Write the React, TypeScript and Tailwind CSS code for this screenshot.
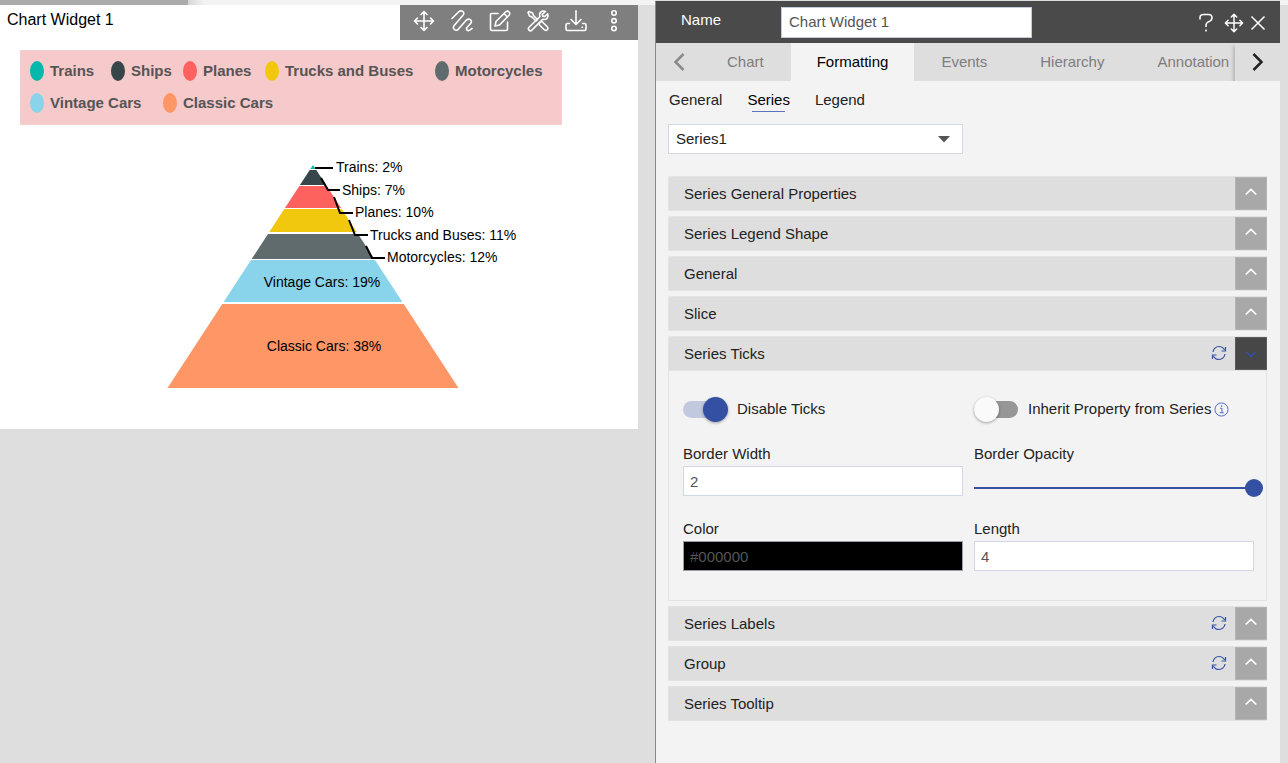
import React, { useState } from 'react';

const legendItems = [
  { name: 'Trains', dot: 'bg-[#04b8ab]', width: 'w-[81px]' },
  { name: 'Ships', dot: 'bg-[#374649]', width: 'w-[72px]' },
  { name: 'Planes', dot: 'bg-[#fd625e]', width: 'w-[82px]' },
  { name: 'Trucks and Buses', dot: 'bg-[#f2c80f]', width: 'w-[170px]' },
  { name: 'Motorcycles', dot: 'bg-[#5f6b6d]', width: 'w-[107px]' },
  { name: 'Vintage Cars', dot: 'bg-[#8ad4eb]', width: 'w-[133px]' },
  { name: 'Classic Cars', dot: 'bg-[#fe9666]', width: 'w-[133px]' },
];

const slices = [
  { label: 'Trains: 2%', color: '#04b8ab', top: 10, bottom: 14, x: 181, y: 17, tick: '160,13 178,13' },
  { label: 'Ships: 7%', color: '#374649', top: 15, bottom: 30, x: 187, y: 40, tick: '166,23 173,35 185,35' },
  { label: 'Planes: 10%', color: '#fd625e', top: 31, bottom: 53, x: 200, y: 62, tick: '179,42 185,58 198,58' },
  { label: 'Trucks and Buses: 11%', color: '#f2c80f', top: 54, bottom: 77, x: 215, y: 85, tick: '194,65 200,80 213,80' },
  { label: 'Motorcycles: 12%', color: '#5f6b6d', top: 79, bottom: 104, x: 232, y: 107, tick: '211,91 217,103 230,103' },
  { label: 'Vintage Cars: 19%', color: '#8ad4eb', top: 105, bottom: 147, x: 167, y: 132 },
  { label: 'Classic Cars: 38%', color: '#fe9666', top: 149, bottom: 233, x: 169, y: 196 },
];

// Apex is at (158, 10), base is 291 wide at y = 233
const slicePoints = (top: number, bottom: number) => {
  const half = (y: number) => ((y - 10) / 223) * 145.5;
  return [
    [158 - half(top), top],
    [158 + half(top), top],
    [158 + half(bottom), bottom],
    [158 - half(bottom), bottom],
  ]
    .map((p) => p.join(','))
    .join(' ');
};

const Icon = ({ children, className = 'size-[22px]' }: { children: React.ReactNode; className?: string }) => (
  <svg
    viewBox="0 0 22 22"
    className={className}
    fill="none"
    stroke="currentColor"
    strokeWidth="1.6"
    strokeLinecap="round"
    strokeLinejoin="round"
    aria-hidden="true"
  >
    {children}
  </svg>
);

const movePath = 'M11 1.5v19M1.5 11h19M8 4.5l3-3 3 3M8 17.5l3 3 3-3M4.5 8l-3 3 3 3M17.5 8l3 3-3 3';

const toolbar = [
  { name: 'Move', icon: <path d={movePath} /> },
  {
    name: 'Style',
    icon: (
      <path d="M1 8.500 7.500 2c3-2.500 7-.2 4.500 3.200L3.200 15.500c-2.200 3 1.300 6.300 4 3.800l8-9c2.800-2.700 6.800-.2 4.500 3L16 17.500c-1.500 2.200.8 4 2.700 2.700L21 18.500" />
    ),
  },
  {
    name: 'Edit',
    icon: (
      <>
        <path d="M9 3.500H2.500c-.8 0-1 .4-1 1V19c0 1 .6 1.500 1.500 1.500h14c1 0 1.500-.5 1.500-1.500v-7" />
        <path d="m7 11.500 9.500-9.500c1.200-1 2.500-1 3.500 0s1 2.200 0 3.300L10.500 15l-4.500 1zM15 3.500l3.500 3.500" />
      </>
    ),
  },
  {
    name: 'Tools',
    icon: (
      <>
        <path d="M2 1.500 5.500 3l1 2.500 4 4-1.500 1.500-4-4-2.500-1L1 2.500zM13.500 12l1.500-.5 5 5c1.500 1.500.8 2.600.2 3.200s-1.700 1.300-3.200-.2l-5-5 .5-1.500z" />
        <path d="M18.500 1.500c-4-1.500-7 1.500-5.500 5L2 17.200c-1 1-.8 2.100 0 2.900s2 .9 2.900 0L15.700 9.200c3.500 1.300 6.300-1.700 4.900-5.300L17.800 6.500l-2.100-.4-.4-2z" />
      </>
    ),
  },
  {
    name: 'Download',
    icon: (
      <>
        <path d="M11 .8V14M6 9.500l5 5 5-5" />
        <path d="M4.500 13.500H2.500c-1 0-1.500.6-1.500 1.500v4c0 1 .5 1.500 1.500 1.500h17c1 0 1.500-.5 1.500-1.500v-4c0-.9-.5-1.500-1.500-1.500h-2M17 17.200h.5" />
      </>
    ),
  },
  {
    name: 'More',
    icon: (
      <>
        <circle cx="11" cy="3" r="2.200" />
        <circle cx="11" cy="10.800" r="2.200" />
        <circle cx="11" cy="18.500" r="2.200" />
      </>
    ),
  },
];

const ChartWidget = () => (
  <section className="relative mr-[17px] bg-white pb-[34px]">
    <h1 className="px-[7px] pt-[3px] text-[16px] leading-6 text-black">Chart Widget 1</h1>
    <div className="absolute top-0 right-0 flex h-[35px] items-start gap-4 bg-[#7f7f7f] px-[13px] pt-[5px] text-white">
      {toolbar.map(({ name, icon }) => (
        <button key={name} type="button" aria-label={name}>
          <Icon>{icon}</Icon>
        </button>
      ))}
    </div>

    <ul className="mt-[18px] ml-5 flex w-[542px] flex-wrap border border-[#f3cfd0] bg-[#f6c9ca] px-[9px] pt-1 pb-[5px]">
      {legendItems.map(({ name, dot, width }) => (
        <li key={name} className={`flex h-8 items-center gap-[6px] whitespace-nowrap ${width}`}>
          <span className={`h-5 w-[14px] shrink-0 rounded-[50%] ${dot}`} />
          <span className="pt-px text-[15px] font-bold text-[#555]">{name}</span>
        </li>
      ))}
    </ul>

    <svg viewBox="0 0 370 240" className="mt-[30px] ml-[155px] h-[240px] w-[370px]" role="img" aria-label="Vehicle share pyramid">
      {slices.map(({ label, color, top, bottom }) => (
        <polygon key={label} points={slicePoints(top, bottom)} fill={color} />
      ))}
      {slices.map(({ label, x, y, tick }) => (
        <g key={label}>
          {tick && <polyline points={tick} fill="none" stroke="#000" strokeWidth="2" />}
          <text x={x} y={y} textAnchor={tick ? 'start' : 'middle'} className="fill-black text-[14px]">
            {label}
          </text>
        </g>
      ))}
    </svg>
  </section>
);

const tabs = ['Chart', 'Formatting', 'Events', 'Hierarchy', 'Annotation'];

const RefreshIcon = () => (
  <svg viewBox="0 0 16 16" className="size-4" fill="none" stroke="currentColor" strokeWidth="1.200" aria-hidden="true">
    <path d="M2 7c.3-3 2.900-5.500 6-5.500 2.400 0 4.400 1.300 5.500 3.300M14.500 2v4h-4M14 9c-.3 3-2.900 5.500-6 5.500-2.400 0-4.400-1.300-5.500-3.300M1.500 14v-4h4" />
  </svg>
);

type SectionProps = { title: string; refresh?: boolean; open?: boolean; children?: React.ReactNode };

const Section = ({ title, refresh, open, children }: SectionProps) => (
  <section className="mb-[5px]">
    <div className="flex h-[35px] items-center border border-r-0 border-[#e3e3e3] bg-[#dedede]">
      <h2 className="flex-1 pt-[2px] pl-[15px] text-[15px]">{title}</h2>
      {refresh && (
        <button type="button" aria-label={`Reset ${title}`} className="mr-2 mb-px text-[#3450a3]">
          <RefreshIcon />
        </button>
      )}
      <button
        type="button"
        aria-label={`Toggle ${title}`}
        aria-expanded={!!open}
        className={`flex h-[33px] w-8 items-center justify-center border ${
          open ? 'border-[#5c5c5c] bg-[#474747] text-[#3450a3]' : 'border-[#b5b5b5] bg-[#a8a8a8] text-white'
        }`}
      >
        <svg
          viewBox="0 0 12 8"
          className={open ? 'h-2 w-3' : 'mb-[3px] h-2 w-3'}
          fill="none"
          stroke="currentColor"
          strokeWidth="1.700"
          aria-hidden="true"
        >
          <path d={open ? 'M1 1.500l5 5 5-5' : 'M.7 6.500L6 1.500l5.300 5'} />
        </svg>
      </button>
    </div>
    {children}
  </section>
);

const toggleClass =
  "relative h-[17px] w-[44px] shrink-0 appearance-none rounded-full bg-[#969696] before:absolute before:-top-1 before:left-0 before:size-[25px] before:rounded-full before:bg-[#fafafa] before:shadow-[0_1px_3px_rgba(0,0,0,0.35)] before:content-[''] checked:bg-[#c2c8de] checked:before:left-5 checked:before:bg-[#3450a3]";

const inputClass = 'block h-[30px] w-full border border-[#d0d7e5] bg-white px-[6px] text-[15px] text-[#555] outline-none';

const TicksForm = () => {
  const [disabled, setDisabled] = useState(true);
  const [inherit, setInherit] = useState(false);

  return (
    <div className="grid grid-cols-2 gap-x-[11px] border border-t-0 border-[#e3e3e3] pt-[25px] pr-3 pb-[29px] pl-[14px]">
      <label className="flex h-[26px] items-center gap-[10px]">
        <input type="checkbox" className={toggleClass} checked={disabled} onChange={(e) => setDisabled(e.target.checked)} />
        Disable Ticks
      </label>
      <div className="flex h-[26px] items-center gap-[3px]">
        <label className="flex items-center gap-[10px] whitespace-nowrap">
          <input type="checkbox" className={toggleClass} checked={inherit} onChange={(e) => setInherit(e.target.checked)} />
          Inherit Property from Series
        </label>
        <svg viewBox="0 0 16 16" className="size-[15px] text-[#4d68c4]" fill="none" stroke="currentColor" aria-hidden="true">
          <circle cx="8" cy="8" r="7" />
          <path d="M6.500 6.700h2V11.500M6 11.500h4.500" />
          <path d="M7.500 4.200h1.200" strokeWidth="1.500" />
        </svg>
      </div>

      <div className="mt-5">
        <label htmlFor="border-width" className="block leading-6">Border Width</label>
        <input id="border-width" className={inputClass} defaultValue="2" />
      </div>
      <div className="mt-5">
        <label htmlFor="border-opacity" className="block leading-6">Border Opacity</label>
        <input
          id="border-opacity"
          type="range"
          defaultValue="100"
          className="mt-[13px] block h-[18px] w-[calc(100%+9px)] appearance-none bg-transparent [&::-webkit-slider-runnable-track]:h-[2px] [&::-webkit-slider-runnable-track]:bg-[#3450a3] [&::-webkit-slider-thumb]:-mt-2 [&::-webkit-slider-thumb]:size-[18px] [&::-webkit-slider-thumb]:appearance-none [&::-webkit-slider-thumb]:rounded-full [&::-webkit-slider-thumb]:bg-[#3450a3]"
        />
      </div>

      <div className="mt-5">
        <label htmlFor="tick-color" className="block leading-6">Color</label>
        <input
          id="tick-color"
          className="block h-[30px] w-full border border-[#9a9da6] bg-black px-[6px] text-[15px] text-[#555] outline-none"
          defaultValue="#000000"
        />
      </div>
      <div className="mt-5">
        <label htmlFor="tick-length" className="block leading-6">Length</label>
        <input id="tick-length" className={inputClass} defaultValue="4" />
      </div>
    </div>
  );
};

const PropertiesPanel = () => (
  <aside className="mt-px flex w-[625px] shrink-0 flex-col border-l border-[#8a8a8a] bg-[#f3f3f3] text-[15px] text-[#222]">
    <header className="flex h-[42px] items-center bg-[#4a4a4a] pr-[14px] pl-[25px] text-white">
      <label htmlFor="widget-name" className="mb-[4px] w-[100px]">Name</label>
      <input
        id="widget-name"
        className="h-[31px] w-[251px] border border-[#c3cbd8] bg-white px-[7px] pb-[2px] text-[15px] text-[#555] outline-none"
        defaultValue="Chart Widget 1"
      />
      <div className="ml-auto flex items-center pt-[2px]">
        <button type="button" aria-label="Help" className="mr-[10px]">
          <svg viewBox="0 0 16 20" className="h-5 w-4" fill="none" stroke="currentColor" strokeWidth="1.500" aria-hidden="true">
            <path d="M2 6.500V4.500C2 2.500 3.500 1.500 5.500 1.500h5c2 0 3.500 1 3.500 3.200 0 2-1 3-2.600 3.700C9 9.400 8 10.200 8 12v2M8 16.500v2" />
          </svg>
        </button>
        <button type="button" aria-label="Move" className="mr-[6px]">
          <Icon className="size-5">
            <path d={movePath} />
          </Icon>
        </button>
        <button type="button" aria-label="Close">
          <svg viewBox="0 0 16 16" className="size-4" fill="none" stroke="currentColor" strokeWidth="1.500" aria-hidden="true">
            <path d="M1.500 1.500l13 13M14.500 1.500l-13 13" />
          </svg>
        </button>
      </div>
    </header>

    <nav className="flex h-[38px] overflow-hidden bg-[#dedede] text-[#7d7d7d]">
      <button type="button" aria-label="Previous tabs" className="flex w-[45px] shrink-0 items-center justify-center text-[#8a8a8a]">
        <svg viewBox="0 0 12 20" className="h-5 w-3" fill="none" stroke="currentColor" strokeWidth="2.500" aria-hidden="true">
          <path d="M10.500 2L2.500 10l8 8" />
        </svg>
      </button>
      <div className="flex min-w-0 flex-1 overflow-hidden">
        {tabs.map((tab) => (
          <button
            key={tab}
            type="button"
            className={`shrink-0 border-r border-[#dedede] px-[26px] ${tab === 'Formatting' ? 'bg-[#f3f3f3] text-black' : ''}`}
          >
            {tab}
          </button>
        ))}
      </div>
      <button
        type="button"
        aria-label="Next tabs"
        className="flex w-[45px] shrink-0 items-center justify-center bg-[#dedede] text-[#222] shadow-[-1px_3px_4px_rgba(0,0,0,0.25)]"
      >
        <svg viewBox="0 0 12 20" className="h-5 w-3" fill="none" stroke="currentColor" strokeWidth="2.500" aria-hidden="true">
          <path d="M1.500 2l8 8-8 8" />
        </svg>
      </button>
    </nav>

    <div className="pr-[13px] pl-3">
      <div className="flex gap-[25px] pt-[7px] pl-px">
        <button type="button" className="h-6">General</button>
        <button
          type="button"
          className="relative h-6 text-black after:absolute after:inset-x-[5px] after:bottom-0 after:h-px after:bg-[#5b73bd] after:content-['']"
        >
          Series
        </button>
        <button type="button" className="h-6">Legend</button>
      </div>

      <div className="relative mt-3 mb-[22px] w-[295px]">
        <select
          aria-label="Series"
          className="block h-[30px] w-full appearance-none border border-[#d0d7e5] bg-white px-[7px] text-[15px] outline-none"
        >
          <option>Series1</option>
        </select>
        <svg viewBox="0 0 14 7" className="pointer-events-none absolute top-3 right-3 h-[7px] w-[14px]" fill="#555" aria-hidden="true">
          <path d="M1 0h12L7 6.500z" />
        </svg>
      </div>

      <Section title="Series General Properties" />
      <Section title="Series Legend Shape" />
      <Section title="General" />
      <Section title="Slice" />
      <Section title="Series Ticks" refresh open>
        <TicksForm />
      </Section>
      <Section title="Series Labels" refresh />
      <Section title="Group" refresh />
      <Section title="Series Tooltip" />
    </div>
  </aside>
);

const App = () => {
  return (
    <div className="flex min-h-screen bg-[#dedede] font-['Liberation_Sans',Arial,sans-serif]">
      <main className="min-w-0 flex-1">
        <div className="flex h-[5px]">
          <div className="w-[188px] bg-[#ababab]" />
          <div className="w-4 bg-gradient-to-r from-[#d6d6d6] to-[#f3f3f3]" />
          <div className="flex-1 bg-[#f3f3f3]" />
        </div>
        <ChartWidget />
      </main>
      <PropertiesPanel />
      <div className="w-2 shrink-0">
        <div className="h-[5px] bg-[#f3f3f3]" />
      </div>
    </div>
  );
};

export default App;
